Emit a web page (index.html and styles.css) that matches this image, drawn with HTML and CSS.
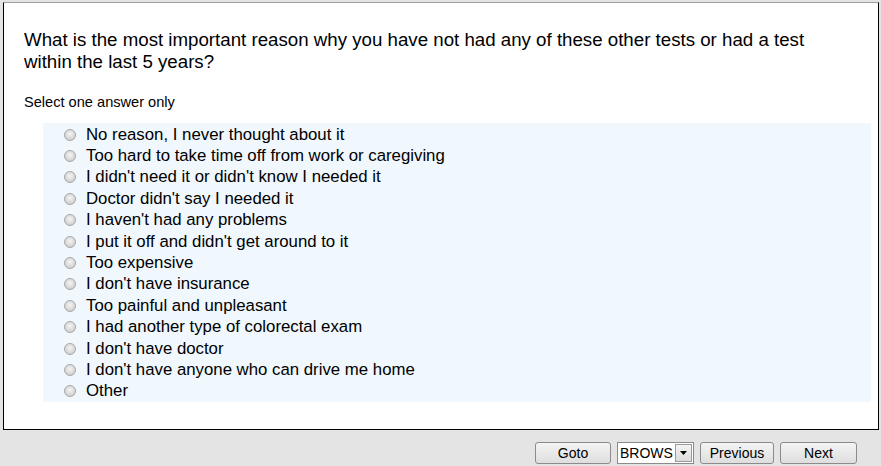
FILE: index.html
```html
<!DOCTYPE html>
<html lang="en">
<head>
  <meta charset="UTF-8" />
  <title>Survey</title>
  <link rel="stylesheet" href="styles.css">
</head>
<body>
  <div class="panel">
    <div class="question">What is the most important reason why you have not had any of these other tests or had a test within the last 5 years?</div>
    <div class="hint">Select one answer only</div>

    <div class="answers">
      <label><input type="radio" name="q" /> No reason, I never thought about it</label>
      <label><input type="radio" name="q" /> Too hard to take time off from work or caregiving</label>
      <label><input type="radio" name="q" /> I didn't need it or didn't know I needed it</label>
      <label><input type="radio" name="q" /> Doctor didn't say I needed it</label>
      <label><input type="radio" name="q" /> I haven't had any problems</label>
      <label><input type="radio" name="q" /> I put it off and didn't get around to it</label>
      <label><input type="radio" name="q" /> Too expensive</label>
      <label><input type="radio" name="q" /> I don't have insurance</label>
      <label><input type="radio" name="q" /> Too painful and unpleasant</label>
      <label><input type="radio" name="q" /> I had another type of colorectal exam</label>
      <label><input type="radio" name="q" /> I don't have doctor</label>
      <label><input type="radio" name="q" /> I don't have anyone who can drive me home</label>
      <label><input type="radio" name="q" /> Other</label>
    </div>
  </div>

  <div class="nav">
    <button class="btn goto">Goto</button>
    <div class="pick">
      <span class="pick-text">BROWS</span>
      <span class="pick-arrow"><svg width="7" height="4" viewBox="0 0 7 4"><path d="M0 0h7L3.5 4z" fill="#000"/></svg></span>
    </div>
    <button class="btn prev">Previous</button>
    <button class="btn next">Next</button>
  </div>
</body>
</html>
```

FILE: styles.css
```css
body {
  margin: 0;
  background: #e4e4e4;
  font-family: "Liberation Sans", Arial, sans-serif;
  color: #000;
  overflow: hidden;
}
.panel {
  margin: 2px 0 0 3px;
  width: 876px;
  height: 428px;
  box-sizing: border-box;
  background: #fff;
  border: 1px solid #000;
  border-top-color: #a0a0a0;
  padding: 26px 7px 0 20px;
}
.question {
  font-size: 18.7px;
  line-height: 22px;
  padding-right: 40px;
}
.hint {
  font-size: 14.6px;
  line-height: 17px;
  margin-top: 21px;
}
.answers {
  margin-top: 12px;
  margin-left: 19px;
  background: #f0f7fd;
  padding: 1px 0 0 20px;
  height: 279px;
  box-sizing: border-box;
}
.answers label {
  display: flex;
  align-items: center;
  font-size: 16.8px;
  height: 21.4px;
}
.answers input {
  appearance: none;
  width: 12px;
  height: 12px;
  margin: 0 10px 0 1px;
  border-radius: 50%;
  border: 1px solid #a7a7a7;
  background: radial-gradient(circle at 50% 40%, #f4f4f4 0, #dadada 55%, #c4c4c4 100%);
  box-sizing: border-box;
}
.nav {
  display: flex;
  justify-content: flex-end;
  gap: 6px;
  padding: 12px 24px 0 0;
}
.btn {
  height: 22px;
  border: 1px solid #8b8b8b;
  border-radius: 3px;
  background: linear-gradient(#f4f4f4, #dedede);
  font-family: "Liberation Sans", Arial, sans-serif;
  font-size: 14px;
  color: #000;
  padding: 0;
}
.goto { width: 76px; }
.prev { width: 74px; }
.next { width: 77px; }
.pick {
  display: flex;
  align-items: center;
  width: 77px;
  height: 22px;
  box-sizing: border-box;
  border: 1px solid #8b8b8b;
  background: #fff;
  font-size: 14px;
}
.pick-text {
  flex: 1;
  padding-left: 2px;
}
.pick-arrow {
  width: 17px;
  height: 18px;
  margin-right: 1px;
  display: flex;
  align-items: center;
  justify-content: center;
  background: linear-gradient(#f4f4f4, #dcdcdc);
  border: 1px solid #9a9a9a;
  box-sizing: border-box;
}
```
